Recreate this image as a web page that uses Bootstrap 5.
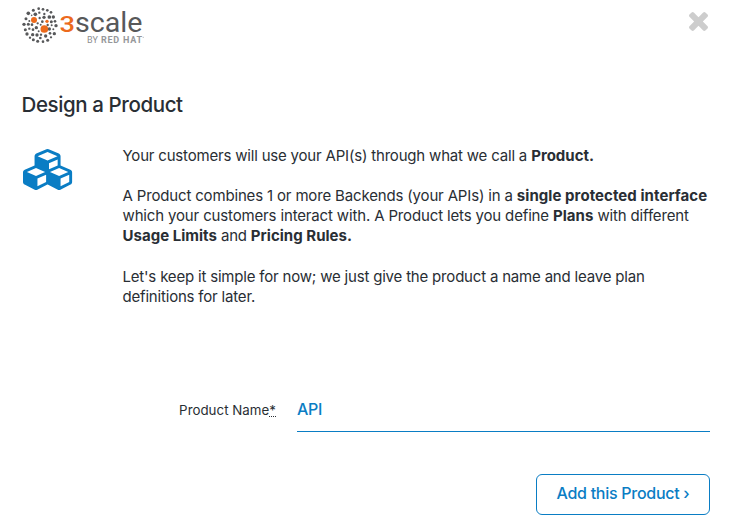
<!DOCTYPE html>
<html lang="en">
<head>
<meta charset="utf-8">
<meta name="viewport" content="width=device-width, initial-scale=1">
<title>Design a Product</title>
<link rel="stylesheet" href="https://cdn.jsdelivr.net/npm/bootstrap@5.3.0/dist/css/bootstrap.min.css">
<style>
body{font-family:Inter,"Open Sans",sans-serif;color:#292e34;font-size:15px;line-height:20px;overflow:hidden}
.wizard{width:733px;height:530px;padding:4px 23px 0 22px}
.brand{width:126px;height:42px}
.close-btn{margin:8px 2px 0 0;line-height:0}
.wizard-title{font-size:20.5px;line-height:26px;font-weight:450;letter-spacing:-.4px;margin:46px 0 0 -.5px}
.intro{margin-top:28px}
.cubes{width:52px;height:41px;margin:3px 47.5px 0 1px;flex:none}
.copy{font-weight:430;letter-spacing:-.19px;white-space:nowrap}
.copy p{margin:0 0 20px}
.copy p+p{margin-bottom:21px}
.copy strong{font-weight:700;letter-spacing:.02px}
.looser{letter-spacing:-.15px}
.copy .loosest{letter-spacing:-.16px}
.copy .loosest strong{letter-spacing:.06px}
.field-row{margin-top:85px;height:40px}
.field-label{width:254px;margin-right:21px;font-size:13.3px;letter-spacing:.03px;line-height:20px;padding-top:8px;font-weight:430}
.field-label abbr{cursor:default;text-decoration-thickness:1px}
.name-input{height:40px;border:0;border-bottom:1px solid #0a7dc4;border-radius:0;padding:0 0 6px;color:#0a7dc4;font-size:16px;font-weight:500;letter-spacing:-.3px}
.add-btn{margin-top:42px;width:174px;height:41px;padding:0 0 3px;border:1px solid #0a7dc4;border-radius:6px;color:#0a7dc4;font-size:16px;font-weight:500;letter-spacing:-.28px}
</style>
</head>
<body class="bg-white">
<main class="wizard d-flex flex-column">
<header class="d-flex justify-content-between align-items-start">
<svg class="brand" viewBox="22 4 126 42" role="img" aria-label="3scale by Red Hat">
<g id="dots" fill="#57585a" transform="translate(15 0) scale(.33333)">
<circle cx="71" cy="26" r="4"/><circle cx="84" cy="28" r="4"/><circle cx="55" cy="31" r="4.5"/><circle cx="97" cy="31" r="4"/><circle cx="40" cy="40" r="5.5"/><circle cx="61" cy="43" r="5.5"/><circle cx="73" cy="38" r="3.5"/><circle cx="88" cy="42" r="3.5"/><circle cx="108" cy="37" r="4"/>
<circle cx="50" cy="46" r="2.5"/><circle cx="103" cy="51" r="5.5"/><circle cx="115" cy="51" r="5"/><circle cx="33" cy="56" r="4.5"/><circle cx="43" cy="63" r="3"/><circle cx="74" cy="54" r="3.5"/><circle cx="87" cy="52" r="5"/><circle cx="120" cy="64" r="4"/><circle cx="109" cy="65" r="4.5"/><circle cx="82" cy="65" r="4"/>
<circle cx="27" cy="73" r="5"/><circle cx="40" cy="73" r="4.5"/><circle cx="51" cy="74" r="4"/><circle cx="68" cy="70" r="3.5"/><circle cx="77" cy="74" r="3"/><circle cx="98" cy="75" r="3.5"/><circle cx="110" cy="76" r="3"/><circle cx="123" cy="77" r="5"/>
<circle cx="31" cy="89" r="4.5"/><circle cx="43" cy="86" r="3.5"/><circle cx="54" cy="89" r="4"/><circle cx="64" cy="83" r="5"/><circle cx="71" cy="94" r="3"/><circle cx="103" cy="87" r="5"/><circle cx="115" cy="88" r="3"/><circle cx="118" cy="101" r="5"/>
<circle cx="36" cy="102" r="5"/><circle cx="53" cy="104" r="5"/><circle cx="66" cy="105" r="5"/><circle cx="78" cy="104" r="3.5"/><circle cx="92" cy="108" r="5"/><circle cx="105" cy="100" r="4"/><circle cx="108" cy="112" r="3.5"/>
<circle cx="45" cy="113" r="3.5"/><circle cx="55" cy="119" r="4.5"/><circle cx="68" cy="124" r="4.5"/><circle cx="76" cy="114" r="4"/><circle cx="84" cy="125" r="4"/><circle cx="98" cy="121" r="4.5"/>
<g fill="#ec6a1c"><circle cx="57" cy="60" r="9"/><circle cx="96" cy="64" r="5"/><circle cx="88" cy="87" r="11.5"/></g>
</g>
<text x="59.5" y="32" font-family="Roboto" font-size="22" font-weight="500" fill="#ec6a1c" textLength="15.5" lengthAdjust="spacingAndGlyphs">3</text>
<text x="75" y="32" font-family="Roboto" font-size="27" fill="#57585a" textLength="67.5" lengthAdjust="spacingAndGlyphs">scale</text>
<text x="87" y="43" font-family="Roboto" font-size="9" fill="#8d8e90" textLength="11">BY</text>
<text x="101" y="43" font-family="Roboto" font-size="9" font-weight="700" fill="#96979a" textLength="41">RED HAT</text>
<circle cx="143.2" cy="37.3" r=".5" fill="#96979a"/>
</svg>
<a class="close-btn" href="#" aria-label="Close"><svg width="19" height="19" viewBox="302 366 1188 1188"><path fill="#cdcdcd" d="M1490 1322q0 40-28 68l-136 136q-28 28-68 28t-68-28l-294-294-294 294q-28 28-68 28t-68-28l-136-136q-28-28-28-68t28-68l294-294-294-294q-28-28-28-68t28-68l136-136q28-28 68-28t68 28l294 294 294-294q28-28 68-28t68 28l136 136q28 28 28 68t-28 68l-294 294 294 294q28 28 28 68z"/></svg></a>
</header>
<h1 class="wizard-title">Design a Product</h1>
<section class="intro d-flex align-items-start">
<svg class="cubes" viewBox="0 0 2304 1792" preserveAspectRatio="none" aria-hidden="true"><path fill="#0a7dc4" d="M640 1632l384-192v-314l-384 164v342zm-64-454l404-173-404-173-404 173zm1088 454l384-192v-314l-384 164v342zm-64-454l404-173-404-173-404 173zm-448-293l384-165v-266l-384 164v267zm-64-379l441-189-441-189-441 189zm1088 518v416q0 36-19 67t-52 47l-448 224q-25 14-57 14t-57-14l-448-224q-4-2-7-4-2 2-7 4l-448 224q-25 14-57 14t-57-14l-448-224q-33-16-52-47t-19-67v-416q0-38 21.5-70t56.5-48l434-186v-400q0-38 21.5-70t56.5-48l448-192q23-10 50-10t50 10l448 192q35 16 56.5 48t21.5 70v400l434 186q36 16 57 48t21 70z"/></svg>
<div class="copy">
<p>Your customers will use your API(s) through what we call a <strong>Product.</strong></p>
<p><span class="loosest">A Product combines 1 or more Backends (your APIs) in a <strong>single protected interface</strong></span><br><span class="looser">which your customers interact with. A Product lets you define <strong>Plans</strong> with different</span><br><strong>Usage Limits</strong> and <strong>Pricing Rules.</strong></p>
<p class="mb-0">Let's keep it simple for now; we just give the product a name and leave plan<br>definitions for later.</p>
</div>
</section>
<form class="d-flex flex-column">
<div class="field-row d-flex">
<label class="field-label text-end flex-shrink-0" for="name">Product Name<abbr title="required">*</abbr></label>
<input class="name-input form-control shadow-none" id="name" type="text" value="API">
</div>
<button class="add-btn btn align-self-end" type="button">Add this Product ›</button>
</form>
</main>
<script src="https://cdn.jsdelivr.net/npm/bootstrap@5.3.0/dist/js/bootstrap.bundle.min.js"></script>
</body>
</html>
